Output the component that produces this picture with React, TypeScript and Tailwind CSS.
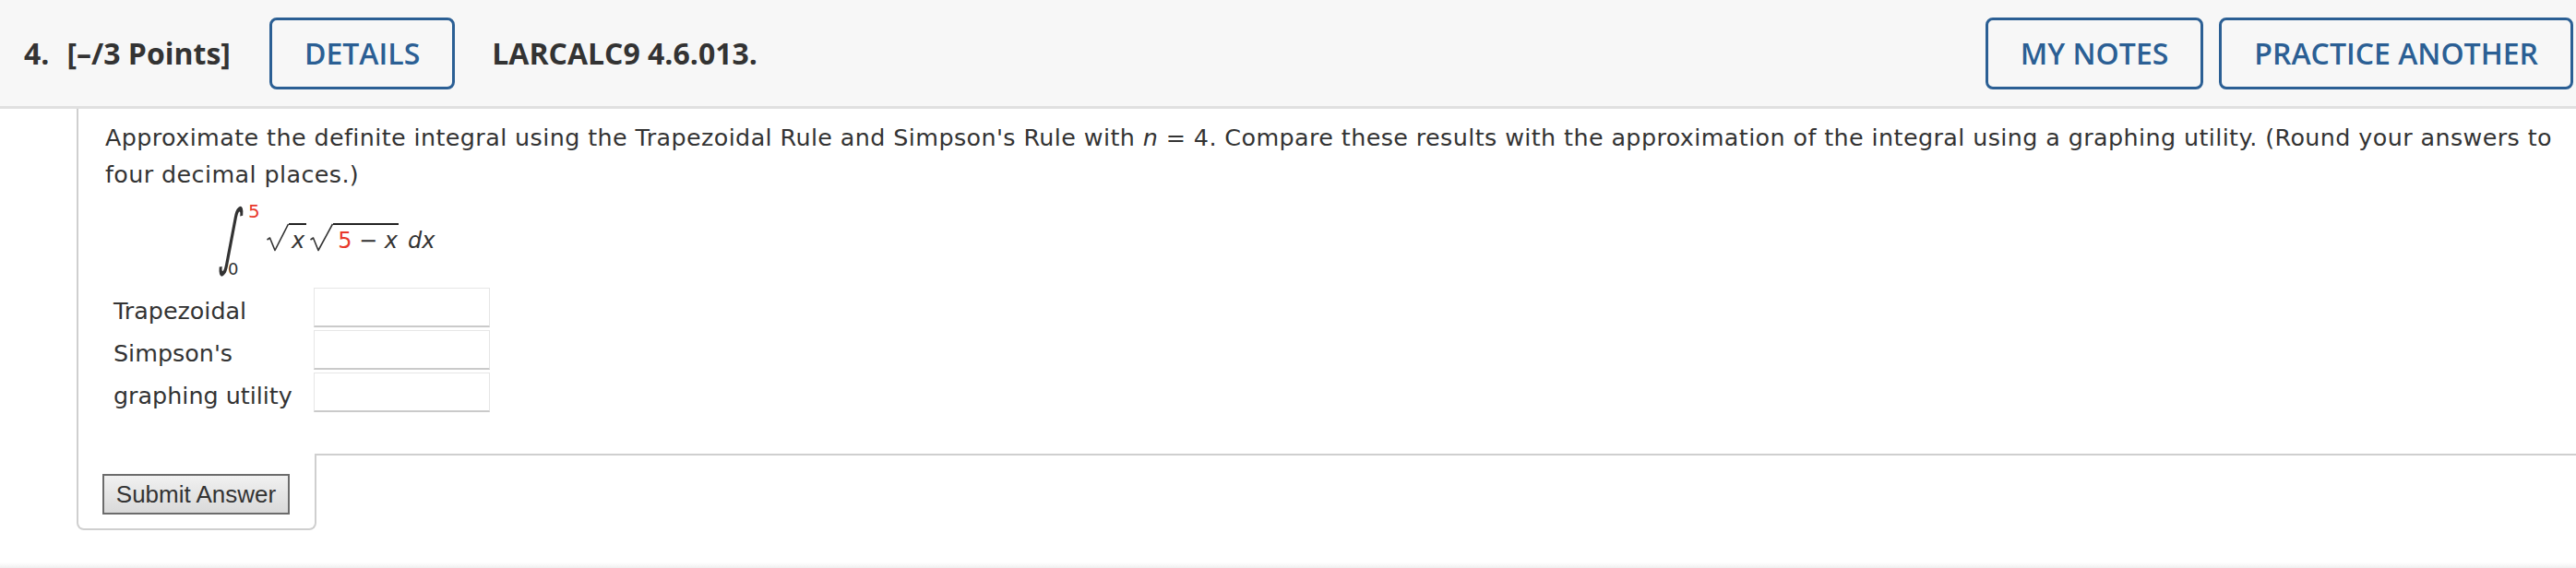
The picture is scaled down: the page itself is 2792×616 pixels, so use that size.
import type { ReactNode } from 'react'

// Question card: header bar, prompt with integral, answer rows, submit tab.

const RED = '#e8382b'

function HeaderButton({ children }: { children: ReactNode }) {
  return (
    <button
      type="button"
      className="h-[78px] rounded-[8px] border-[3px] border-[#2b5f94] px-[35px] font-semibold text-[#2b5f94]"
    >
      {children}
    </button>
  )
}

function Radical({ width, children }: { width: number; children: ReactNode }) {
  return (
    <span className="flex items-start">
      <svg width={width} height={31} viewBox={`0 0 ${width} 31`} aria-hidden="true">
        <polyline
          points={`0.5,18 3.5,16 9,29.5 ${width - 0.5},1`}
          fill="none"
          stroke="#333"
          strokeWidth="1.6"
          strokeLinejoin="round"
        />
      </svg>
      {children}
    </span>
  )
}

function AnswerRow({ label }: { label: string }) {
  return (
    <>
      <div className="flex h-[43px] items-center pt-[6px] leading-[28px]">{label}</div>
      <input
        type="text"
        aria-label={label}
        className="h-[43px] w-[191px] border border-[#e6e6e6] border-b-2 border-b-[#cacaca] bg-white outline-none"
      />
    </>
  )
}

export default function App() {
  return (
    <div className="relative h-[616px] w-[2792px] overflow-hidden bg-white text-[#333]">
      {/* Header */}
      <header className="flex h-[118px] items-center border-b-[3px] border-[#e0e0e0] bg-[#f7f7f7] pl-[26px] pr-[3px] font-['Open_Sans',sans-serif] text-[32px] font-bold text-[#333]">
        <span>4.</span>
        <span className="ml-[19px]">[–/3 Points]</span>
        <div className="ml-[42px]">
          <HeaderButton>DETAILS</HeaderButton>
        </div>
        <span className="ml-[40px]">LARCALC9 4.6.013.</span>
        <div className="ml-auto flex gap-[17px]">
          <HeaderButton>MY NOTES</HeaderButton>
          <HeaderButton>PRACTICE ANOTHER</HeaderButton>
        </div>
      </header>

      {/* Question body */}
      <section className="ml-[83px] h-[374px] border-l-2 border-[#cfcfcf] pl-[29px] pt-[11px] font-['DejaVu_Sans',Verdana,sans-serif] text-[25.4px] text-[#333]">
        <p className="leading-[40px] tracking-[0.4px]">
          Approximate the definite integral using the Trapezoidal Rule and Simpson's Rule with{' '}
          <i>n</i> = 4. Compare these results with the approximation of the integral using a graphing
          utility. (Round your answers to
          <br />
          four decimal places.)
        </p>

        {/* ∫0^5 √x √(5 − x) dx */}
        <div className="ml-[121px] mt-[14px] flex h-[76px] items-start text-[24px]">
          <div className="relative h-[76px] w-[50px]">
            <span className="absolute left-[6px] top-[13px] -skew-x-[18deg] scale-y-[1.96] text-[40px] leading-none">∫</span>
            <span className="absolute left-[34px] top-[-4px] text-[20px] leading-none text-[#e8382b]">5</span>
            <span className="absolute bottom-[-2px] left-[12px] text-[18px] leading-none">0</span>
          </div>
          <div className="ml-[4px] mt-[19px] flex items-start">
            <Radical width={24}>
              <span className="border-t-2 border-[#222] pl-[3px] pr-[2px] pt-[5px] italic leading-[24px]">x</span>
            </Radical>
            <span className="ml-[4px]">
              <Radical width={25}>
                <span className="border-t-2 border-[#222] pl-[5px] pr-[1px] pt-[5px] leading-[24px]">
                  <span style={{ color: RED }}>5</span> − <i>x</i>
                </span>
              </Radical>
            </span>
            <span className="ml-[10px] mt-[7px] italic leading-[24px]">dx</span>
          </div>
        </div>

        {/* Answers */}
        <div className="ml-[9px] mt-[13px] grid grid-cols-[217px_191px] gap-y-[3px]">
          <AnswerRow label="Trapezoidal" />
          <AnswerRow label="Simpson's" />
          <AnswerRow label="graphing utility" />
        </div>
      </section>

      {/* Submit tab */}
      <div className="flex">
        <div className="ml-[83px] flex h-[83px] w-[260px] items-start rounded-b-[8px] border-x-2 border-b-2 border-[#cfcfcf] pl-[26px] pt-[22px]">
          <button
            type="button"
            className="h-[44px] w-[203px] border-2 border-[#6c6c6c] bg-linear-to-b from-[#f1f1f1] to-[#d9d9d9] font-['Liberation_Sans',Arial,sans-serif] text-[26px] text-[#333]"
          >
            Submit Answer
          </button>
        </div>
        <div className="flex-1 border-t-2 border-[#cfcfcf]" />
      </div>

      <div className="absolute bottom-0 left-0 right-0 h-[6px] bg-linear-to-b from-white to-[#efefef]" />
    </div>
  )
}
